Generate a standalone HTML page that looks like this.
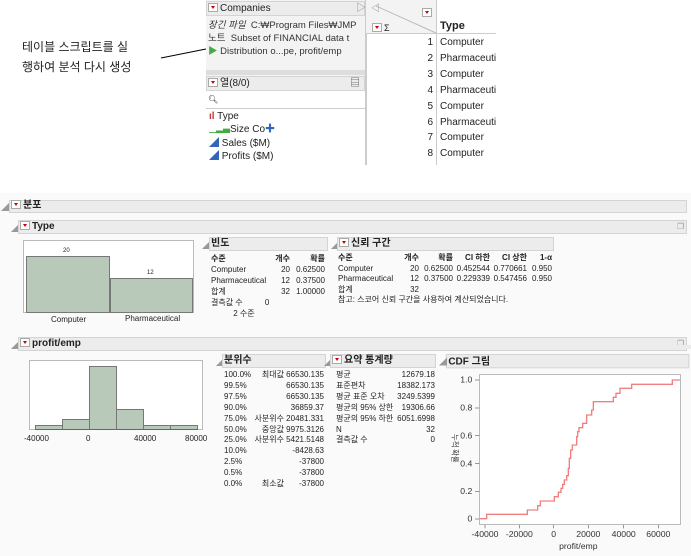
<!DOCTYPE html>
<html><head><meta charset="utf-8"><style>
body{margin:0;width:691px;height:556px;background:#fff;position:relative;overflow:hidden;font-family:"Liberation Sans","Noto Sans CJK KR",sans-serif;color:#222}
.a{position:absolute;white-space:nowrap}
.s{font-size:8px}
.bar{position:absolute;background:#ececec;border:1px solid #d4d4d4;box-sizing:border-box}
.hd{position:absolute;font-size:10px;font-weight:bold;white-space:nowrap;line-height:12px}
.tri{display:inline-block;width:8px;height:7px;border:1px solid #aaa;background:#fff;vertical-align:-1px;position:relative;margin-right:2px}
.tri:after{content:"";position:absolute;left:1.5px;top:2px;border-left:2.5px solid transparent;border-right:2.5px solid transparent;border-top:3px solid #c00}
.r{text-align:right}
.g{font-size:8px;color:#999}
.l12{line-height:12px}
</style></head><body>
<div class="a" style="left:22px;top:38px;font-size:12px">테이블 스크립트를 실</div>
<div class="a" style="left:22px;top:58px;font-size:12px">행하여 분석 다시 생성</div>
<svg class="a" style="left:0;top:0" width="691" height="190"><line x1="161" y1="58" x2="206" y2="49" stroke="#000" stroke-width="1"/></svg>

<div class="a" style="left:206px;top:0;width:159px;height:165px;background:#f3f3f3;border-right:1px solid #ccc"></div>
<div class="bar" style="left:206px;top:1px;width:159px;height:15px"></div>
<div class="a l12" style="left:208px;top:3px;font-size:10px"><span class="tri"></span>Companies</div>
<div class="a l12" style="left:356px;top:3px;font-size:10px;color:#888">▷</div>
<div class="a l12" style="left:208px;top:20px;font-size:9.5px;color:#333"><i>장긴 파일</i>&nbsp; C:₩Program Files₩JMP</div>
<div class="a l12" style="left:208px;top:33px;font-size:9.5px;color:#333">노트&nbsp; Subset of FINANCIAL data t</div>
<div class="a l12" style="left:208px;top:46px;font-size:9.5px;color:#333"><span style="color:#4a4">▶</span> Distribution o...pe, profit/emp</div>
<div class="a" style="left:206px;top:70px;width:159px;height:5px;background:#ddd"></div>
<div class="bar" style="left:206px;top:76px;width:159px;height:15px"></div>
<div class="a l12" style="left:208px;top:78px;font-size:10px"><span class="tri"></span>열(8/0)</div>
<div class="a l12" style="left:350px;top:78px;font-size:10px;color:#555">▤</div>
<div class="a" style="left:206px;top:91px;width:159px;height:17px;background:#fff;border-bottom:1px solid #ccc"></div>
<div class="a" style="left:208px;top:95px;font-size:8px">🔍︎</div>
<div class="a" style="left:206px;top:109px;width:159px;height:56px;background:#fff"></div>
<div class="a l12" style="left:209px;top:111px;font-size:10px"><span style="color:#c33;font-weight:bold">ıl</span> Type</div>
<div class="a l12" style="left:209px;top:124px;font-size:10px"><span style="color:#4a4;font-size:7px">▁▃▅</span>Size Co<span style="color:#36b">✚</span></div>
<div class="a l12" style="left:209px;top:138px;font-size:10px"><span style="color:#36b">◢</span> Sales ($M)</div>
<div class="a l12" style="left:209px;top:151px;font-size:10px"><span style="color:#36b">◢</span> Profits ($M)</div>

<div class="a" style="left:366px;top:0;width:70px;height:165px;background:#f3f3f3"></div>
<div class="a" style="left:436px;top:0;width:60px;height:34px;background:#fff;border-left:1px solid #ccc"></div>
<svg class="a" style="left:366px;top:0" width="130" height="165">
<line x1="10" y1="6" x2="70" y2="33" stroke="#bbb"/>
<line x1="0" y1="33.5" x2="130" y2="33.5" stroke="#ccc"/>
<g stroke="#ddd"><line x1="0" y1="49.5" x2="130" y2="49.5"/><line x1="0" y1="65.5" x2="130" y2="65.5"/><line x1="0" y1="81.5" x2="130" y2="81.5"/><line x1="0" y1="97.5" x2="130" y2="97.5"/><line x1="0" y1="113.5" x2="130" y2="113.5"/><line x1="0" y1="129.5" x2="130" y2="129.5"/><line x1="0" y1="145.5" x2="130" y2="145.5"/><line x1="0" y1="161.5" x2="130" y2="161.5"/></g>
<text x="5" y="11" font-size="9" fill="#888">◁</text>
</svg>
<div class="a" style="left:422px;top:3px"><span class="tri"></span></div>
<div class="a l12" style="left:372px;top:22px;font-size:9px"><span class="tri"></span>Σ</div>
<div class="a" style="left:440px;top:20px;font-size:11px;font-weight:bold">Type</div>
<div class="a" style="left:366px;top:34px;width:70px;height:131px;background:#fff;border-left:1px solid #ccc"></div>
<div class="a" style="left:436px;top:34px;width:60px;height:131px;background:#fff;border-left:1px solid #ccc"></div>
<div class="a r" style="left:400px;top:35px;width:33px;font-size:10px;line-height:15.9px">1<br>2<br>3<br>4<br>5<br>6<br>7<br>8</div>
<div class="a" style="left:440px;top:35px;width:56px;overflow:hidden;font-size:10px;line-height:15.9px">Computer<br>Pharmaceutical<br>Computer<br>Pharmaceutical<br>Computer<br>Pharmaceutical<br>Computer<br>Computer</div>

<div class="a" style="left:0;top:193px;width:691px;height:363px;background:#fafafa"></div>
<div class="a g" style="left:1px;top:202px">◢</div>
<div class="bar" style="left:9px;top:200px;width:678px;height:13px"></div>
<div class="hd" style="left:11px;top:200px"><span class="tri"></span>분포</div>
<div class="a g" style="left:11px;top:223px">◢</div>
<div class="bar" style="left:18px;top:220px;width:669px;height:14px"></div>
<div class="hd" style="left:20px;top:221px"><span class="tri"></span>Type</div>
<div class="a g" style="left:677px;top:222px">❐</div>

<div class="a" style="left:23px;top:240px;width:171px;height:73px;background:#fff;border:1px solid #bbb;box-sizing:border-box"></div>
<div class="a" style="left:26px;top:256px;width:84px;height:57px;background:#b9c9b9;border:1px solid #777;box-sizing:border-box"></div>
<div class="a" style="left:110px;top:278px;width:83px;height:35px;background:#b9c9b9;border:1px solid #777;box-sizing:border-box"></div>
<div class="a" style="left:63px;top:248px;font-size:6px">20</div>
<div class="a" style="left:147px;top:270px;font-size:6px">12</div>
<div class="a s" style="left:51px;top:315px">Computer</div>
<div class="a s" style="left:125px;top:314px">Pharmaceutical</div>

<div class="a g" style="left:202px;top:240px">◢</div>
<div class="bar" style="left:209px;top:237px;width:119px;height:14px"></div>
<div class="hd" style="left:211px;top:238px">빈도</div>
<div class="a s" style="left:211px;top:253px;line-height:11px"><b>수준</b><br>Computer<br>Pharmaceutical<br>합계<br>결측값 수&nbsp;&nbsp;&nbsp;&nbsp;&nbsp;&nbsp;&nbsp;&nbsp;&nbsp;&nbsp;0<br>&nbsp;&nbsp;&nbsp;&nbsp;&nbsp;&nbsp;&nbsp;&nbsp;&nbsp;&nbsp;2 수준</div>
<div class="a s r" style="left:270px;top:253px;width:20px;line-height:11px"><b>개수</b><br>20<br>12<br>32</div>
<div class="a s r" style="left:290px;top:253px;width:35px;line-height:11px"><b>확률</b><br>0.62500<br>0.37500<br>1.00000</div>

<div class="a g" style="left:331px;top:240px">◢</div>
<div class="bar" style="left:337px;top:237px;width:217px;height:14px"></div>
<div class="hd" style="left:339px;top:238px"><span class="tri"></span>신뢰 구간</div>
<div class="a s" style="left:338px;top:253px;line-height:10.5px"><b>수준</b><br>Computer<br>Pharmaceutical<br>합계<br>참고: 스코어 신뢰 구간을 사용하여 계산되었습니다.</div>
<div class="a s r" style="left:400px;top:253px;width:19px;line-height:10.5px"><b>개수</b><br>20<br>12<br>32</div>
<div class="a s r" style="left:419px;top:253px;width:34px;line-height:10.5px"><b>확률</b><br>0.62500<br>0.37500</div>
<div class="a s r" style="left:453px;top:253px;width:37px;line-height:10.5px"><b>CI 하한</b><br>0.452544<br>0.229339</div>
<div class="a s r" style="left:490px;top:253px;width:37px;line-height:10.5px"><b>CI 상한</b><br>0.770661<br>0.547456</div>
<div class="a s r" style="left:527px;top:253px;width:25px;line-height:10.5px"><b>1-α</b><br>0.950<br>0.950</div>

<div class="a g" style="left:11px;top:340px">◢</div>
<div class="bar" style="left:18px;top:337px;width:669px;height:14px"></div>
<div class="hd" style="left:20px;top:338px"><span class="tri"></span>profit/emp</div>
<div class="a g" style="left:677px;top:339px">❐</div>
<div class="a" style="left:29px;top:360px;width:174px;height:70px;background:#fff;border:1px solid #bbb;box-sizing:border-box"></div>
<svg class="a" style="left:0;top:355px" width="210" height="80">
<g fill="#b9c9b9" stroke="#777" stroke-width="1">
<rect x="35.5" y="70.5" width="27" height="4"/><rect x="62.5" y="64.5" width="27" height="10"/><rect x="89.5" y="11.5" width="27" height="63"/><rect x="116.5" y="54.5" width="27" height="20"/><rect x="143.5" y="70.5" width="27" height="4"/><rect x="170.5" y="70.5" width="27" height="4"/></g>
<line x1="35" y1="74.5" x2="198" y2="74.5" stroke="#666"/>
</svg>
<div class="a s" style="left:24px;top:434px">-40000</div>
<div class="a s" style="left:86px;top:434px">0</div>
<div class="a s" style="left:134px;top:434px">40000</div>
<div class="a s" style="left:185px;top:434px">80000</div>

<div class="a g" style="left:216px;top:357px">◢</div>
<div class="bar" style="left:222px;top:354px;width:104px;height:14px"></div>
<div class="hd" style="left:224px;top:355px">분위수</div>
<div class="a s" style="left:224px;top:370px;line-height:10.9px">100.0%<br>99.5%<br>97.5%<br>90.0%<br>75.0%<br>50.0%<br>25.0%<br>10.0%<br>2.5%<br>0.5%<br>0.0%</div>
<div class="a s r" style="left:250px;top:370px;width:34px;line-height:10.9px">최대값<br><br><br><br>사분위수<br>중앙값<br>사분위수<br><br><br><br>최소값</div>
<div class="a s r" style="left:284px;top:370px;width:40px;line-height:10.9px">66530.135<br>66530.135<br>66530.135<br>36859.37<br>20481.331<br>9975.3126<br>5421.5148<br>-8428.63<br>-37800<br>-37800<br>-37800</div>

<div class="a g" style="left:324px;top:357px">◢</div>
<div class="bar" style="left:330px;top:354px;width:106px;height:14px"></div>
<div class="hd" style="left:332px;top:355px"><span class="tri"></span>요약 통계량</div>
<div class="a s" style="left:336px;top:370px;line-height:10.9px">평균<br>표준편차<br>평균 표준 오차<br>평균의 95% 상한<br>평균의 95% 하한<br>N<br>결측값 수</div>
<div class="a s r" style="left:392px;top:370px;width:43px;line-height:10.9px">12679.18<br>18382.173<br>3249.5399<br>19306.66<br>6051.6998<br>32<br>0</div>

<svg class="a" style="left:435px;top:345px" width="256" height="211" viewBox="0 0 768 633">
<rect x="-10" y="0" width="800" height="12" fill="#ececec"/>
<rect x="33.5" y="28.5" width="728" height="40" fill="#ececec" stroke="#d4d4d4" stroke-width="3"/>
<text x="12" y="58" font-size="24" fill="#999">◢</text>
<text x="40" y="58" font-size="30" font-weight="bold" fill="#222" font-family="Liberation Sans, Noto Sans CJK KR, sans-serif">CDF 그림</text>
<rect x="133.5" y="88.5" width="603" height="450" fill="#fff" stroke="#bbb" stroke-width="3"/>
<polyline fill="none" stroke="#f08080" stroke-width="4" points="135,521 155,521 155,508 277,508 277,495 308,495 308,482 316,482 316,468 358,468 358,455 370,455 370,442 378,442 378,430 383,430 383,418 388,418 388,405 395,405 395,392 400,392 400,370 403,370 403,340 407,340 407,315 412,315 412,300 425,300 425,275 428,275 428,260 432,260 432,248 443,248 443,235 455,235 455,210 470,210 470,195 475,195 475,170 535,170 535,157 543,157 543,145 555,145 555,130 590,130 590,118 712,118 712,105 735,105"/>
<g font-size="26" fill="#333" text-anchor="end" font-family="Liberation Sans, sans-serif">
<text x="112" y="113">1.0</text><text x="112" y="197">0.8</text><text x="112" y="280">0.6</text><text x="112" y="364">0.4</text><text x="112" y="447">0.2</text><text x="112" y="530">0</text></g>
<g stroke="#666" stroke-width="2"><line x1="120" y1="105" x2="133" y2="105"/><line x1="120" y1="189" x2="133" y2="189"/><line x1="120" y1="272" x2="133" y2="272"/><line x1="120" y1="356" x2="133" y2="356"/><line x1="120" y1="439" x2="133" y2="439"/><line x1="120" y1="522" x2="133" y2="522"/>
<line x1="150" y1="540" x2="150" y2="550"/><line x1="253" y1="540" x2="253" y2="550"/><line x1="356" y1="540" x2="356" y2="550"/><line x1="460" y1="540" x2="460" y2="550"/><line x1="566" y1="540" x2="566" y2="550"/><line x1="670" y1="540" x2="670" y2="550"/></g>
<g font-size="26" fill="#333" text-anchor="middle" font-family="Liberation Sans, sans-serif">
<text x="150" y="576">-40000</text><text x="253" y="576">-20000</text><text x="356" y="576">0</text><text x="460" y="576">20000</text><text x="566" y="576">40000</text><text x="670" y="576">60000</text>
<text x="430" y="612">profit/emp</text></g>
<text transform="translate(52,310) rotate(90)" font-size="22" fill="#333" text-anchor="middle" font-family="Noto Sans CJK KR, sans-serif">누적 확률</text>
</svg>
</body></html>
